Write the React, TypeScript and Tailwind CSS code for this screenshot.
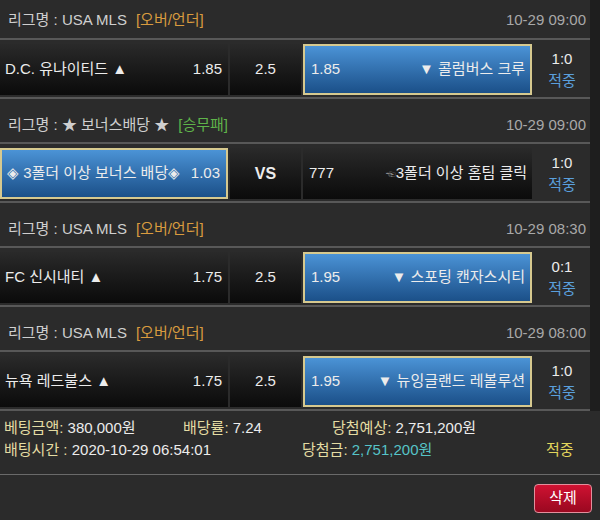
import React from "react";

interface Bet {
  league: string;
  kind: string;
  kindColor: string;
  time: string;
  home: string;
  homeOdds: string;
  mid: string;
  awayOdds: string;
  away: string;
  pick: "home" | "away";
  score: string;
}

const bets: Bet[] = [
  {
    league: "USA MLS",
    kind: "[오버/언더]",
    kindColor: "text-[#d99b3f]",
    time: "10-29 09:00",
    home: "D.C. 유나이티드 ▲",
    homeOdds: "1.85",
    mid: "2.5",
    awayOdds: "1.85",
    away: "▼ 콜럼버스 크루",
    pick: "away",
    score: "1:0",
  },
  {
    league: "★ 보너스배당 ★",
    kind: "[승무패]",
    kindColor: "text-[#5fb44a]",
    time: "10-29 09:00",
    home: "◈ 3폴더 이상 보너스 배당◈",
    homeOdds: "1.03",
    mid: "VS",
    awayOdds: "777",
    away: "3폴더 이상 홈팀 클릭",
    pick: "home",
    score: "1:0",
  },
  {
    league: "USA MLS",
    kind: "[오버/언더]",
    kindColor: "text-[#d99b3f]",
    time: "10-29 08:30",
    home: "FC 신시내티 ▲",
    homeOdds: "1.75",
    mid: "2.5",
    awayOdds: "1.95",
    away: "▼ 스포팅 캔자스시티",
    pick: "away",
    score: "0:1",
  },
  {
    league: "USA MLS",
    kind: "[오버/언더]",
    kindColor: "text-[#d99b3f]",
    time: "10-29 08:00",
    home: "뉴욕 레드불스 ▲",
    homeOdds: "1.75",
    mid: "2.5",
    awayOdds: "1.95",
    away: "▼ 뉴잉글랜드 레볼루션",
    pick: "away",
    score: "1:0",
  },
];

const darkCell = "bg-gradient-to-b from-[#2a2a2a] to-[#0b0b0b]";
const blueCell =
  "bg-gradient-to-b from-[#4b93d6] to-[#1b5089] border-2 border-[#d6c98f]";

const BetGroup: React.FC<{ bet: Bet; first: boolean }> = ({ bet, first }) => (
  <div>
    <div
      className={`flex items-center justify-between border-b-2 border-[#585858] pl-2 pr-1 ${
        first ? "h-[40px] pt-[2px]" : "h-[45px] pt-[9px]"
      }`}
    >
      <div className="flex gap-[9px] text-[#cfcfcf]">
        <span>리그명 : {bet.league}</span>
        <span className={bet.kindColor}>{bet.kind}</span>
      </div>
      <span className="text-[#a8a8a8]">{bet.time}</span>
    </div>
    <div className="flex h-[59px] gap-[2px] border-b-2 border-[#585858] pt-[4px] pb-[2px]">
      <div
        className={`flex w-[228px] items-center justify-between pl-[5px] pr-[6px] ${
          bet.pick === "home" ? blueCell : darkCell
        }`}
      >
        <span>{bet.home}</span>
        <span>{bet.homeOdds}</span>
      </div>
      <div
        className={`flex w-[71px] items-center justify-center ${darkCell} ${
          bet.mid === "VS" ? "font-bold text-[16px]" : ""
        }`}
      >
        {bet.mid}
      </div>
      <div
        className={`flex w-[229px] items-center justify-between pl-[6px] pr-[5px] ${
          bet.pick === "away" ? blueCell : darkCell
        }`}
      >
        <span>{bet.awayOdds}</span>
        <span>
          {bet.pick === "home" && (
            <span className="text-[10px] text-[#8a8a8a]">☜</span>
          )}
          {bet.away}
        </span>
      </div>
      <div className="flex flex-1 flex-col items-center justify-center leading-[22px]">
        <span>{bet.score}</span>
        <span className="text-[#5a9fdc]">적중</span>
      </div>
    </div>
  </div>
);

export default function App() {
  return (
    <div
      className="h-[520px] w-[600px] overflow-hidden bg-[#2b2b2b] text-[15px] text-[#ececec]"
      style={{ fontFamily: '"Liberation Sans", "Noto Sans CJK KR", sans-serif' }}
    >
      <div className="flex">
        <div className="flex-1">
          {bets.map((bet, i) => (
            <BetGroup key={i} bet={bet} first={i === 0} />
          ))}
        </div>
        <div className="w-[10px] bg-[#1e1e1e]" />
      </div>

      <div className="border-b border-[#6a6a6a] pt-[6px] pb-[13px] leading-[22px]">
        <div className="flex">
          <div className="w-[183px] pl-[4px]">
            <span className="text-[#e4dca3]">베팅금액:</span> 380,000원
          </div>
          <div className="w-[149px]">
            <span className="text-[#e4dca3]">배당률:</span> 7.24
          </div>
          <div>
            <span className="text-[#e4dca3]">당첨예상:</span> 2,751,200원
          </div>
        </div>
        <div className="flex">
          <div className="w-[302px] pl-[4px]">
            <span className="text-[#e4dca3]">배팅시간 :</span> 2020-10-29 06:54:01
          </div>
          <div className="w-[244px]">
            <span className="text-[#e4dca3]">당첨금:</span>{" "}
            <span className="text-[#56c4c8]">2,751,200원</span>
          </div>
          <div className="text-[#e2d65c]">적중</div>
        </div>
      </div>

      <div className="flex justify-end pt-[9px] pr-[8px]">
        <button className="h-[29px] w-[58px] rounded-[4px] border border-[#e28f9c] bg-gradient-to-b from-[#cf1232] to-[#9a0820] text-white">
          삭제
        </button>
      </div>
    </div>
  );
}
